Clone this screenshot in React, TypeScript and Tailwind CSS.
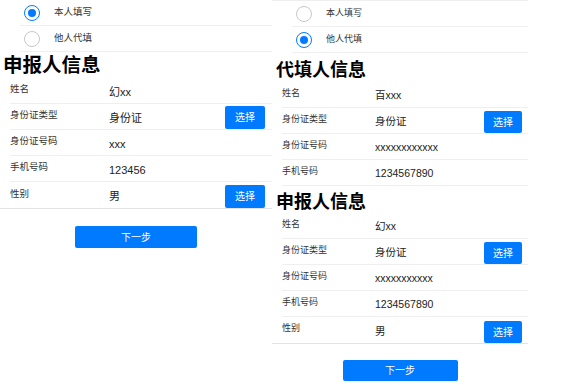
import React from 'react';

type Field = { label: string; value: string; pick?: boolean };

function Radio({ checked }: { checked: boolean }) {
  if (checked) {
    return (
      <span className="flex h-[16px] w-[16px] shrink-0 items-center justify-center rounded-full border-[1.5px] border-[#007aff]">
        <span className="h-[8px] w-[8px] rounded-full bg-[#007aff]" />
      </span>
    );
  }
  return <span className="h-[16px] w-[16px] shrink-0 rounded-full border border-[#c8c8c8]" />;
}

function RadioRow({ checked, text, big }: { checked: boolean; text: string; big?: boolean }) {
  return (
    <div className="ml-[20px] flex h-[26px] items-center border-b border-[#efefef] pl-[4px]">
      <Radio checked={checked} />
      <span className={`ml-[14px] text-[#333] ${big ? 'text-[9.5px]' : 'text-[9px]'}`}>{text}</span>
    </div>
  );
}

function FieldRow({ f, last, big }: { f: Field; last?: boolean; big?: boolean }) {
  return (
    <div className={`ml-[10px] flex h-[26px] items-center ${last ? '' : 'border-b border-[#efefef]'}`}>
      <span className={`mb-[2px] shrink-0 text-[#333] ${big ? 'w-[99px] text-[9.5px]' : 'w-[93px] text-[9px]'}`}>
        {f.label}
      </span>
      <span className={`mt-[3px] flex-1 text-[#222] ${big ? 'text-[11px]' : 'text-[10.5px]'}`}>{f.value}</span>
      {f.pick && (
        <button
          className={`self-end rounded-[2px] bg-[#007aff] text-[10px] text-white ${
            big ? 'mr-[7px] h-[23px] w-[40px]' : 'mr-[6px] h-[22px] w-[38px]'
          }`}
        >
          选择
        </button>
      )}
    </div>
  );
}

const selfFields: Field[] = [
  { label: '姓名', value: '幻xx' },
  { label: '身份证类型', value: '身份证', pick: true },
  { label: '身份证号码', value: 'xxx' },
  { label: '手机号码', value: '123456' },
  { label: '性别', value: '男', pick: true },
];

const agentFields: Field[] = [
  { label: '姓名', value: '百xxx' },
  { label: '身份证类型', value: '身份证', pick: true },
  { label: '身份证号码', value: 'xxxxxxxxxxxx' },
  { label: '手机号码', value: '1234567890' },
];

const applicantFields: Field[] = [
  { label: '姓名', value: '幻xx' },
  { label: '身份证类型', value: '身份证', pick: true },
  { label: '身份证号码', value: 'xxxxxxxxxxx' },
  { label: '手机号码', value: '1234567890' },
  { label: '性别', value: '男', pick: true },
];

export default function App() {
  return (
    <div className="flex h-[385px] w-[564px] overflow-hidden bg-white font-['Liberation_Sans','Noto_Sans_CJK_SC',sans-serif]">
      {/* filling for self */}
      <div className="w-[272px] shrink-0">
        <RadioRow checked text="本人填写" big />
        <RadioRow checked={false} text="他人代填" big />
        <div className="flex h-[26px] items-center pl-[3px] text-[19.5px] font-bold leading-[20px] text-black">
          申报人信息
        </div>
        <div className="border-b border-[#e3e3e3]">
          {selfFields.map((f, i) => (
            <FieldRow key={f.label} f={f} big last={i === selfFields.length - 1} />
          ))}
        </div>
        <button className="mx-auto mt-[17px] block h-[22px] w-[122px] rounded-[2px] bg-[#007aff] text-[10px] text-white">
          下一步
        </button>
      </div>

      {/* filling for someone else */}
      <div className="w-[256px] shrink-0">
        <div className="border-t border-[#efefef]">
          <RadioRow checked={false} text="本人填写" />
          <RadioRow checked text="他人代填" />
        </div>
        <div className="h-[29px] pl-[4px] pt-[7px] text-[18px] font-bold leading-[20px] text-black">代填人信息</div>
        {agentFields.map((f) => (
          <FieldRow key={f.label} f={f} />
        ))}
        <div className="h-[27px] pl-[4px] pt-[6px] text-[18px] font-bold leading-[20px] text-black">申报人信息</div>
        <div className="border-b border-[#e3e3e3]">
          {applicantFields.map((f, i) => (
            <FieldRow key={f.label} f={f} last={i === applicantFields.length - 1} />
          ))}
        </div>
        <button className="mx-auto mt-[16px] block h-[21px] w-[115px] rounded-[2px] bg-[#007aff] text-[10px] text-white">
          下一步
        </button>
      </div>
    </div>
  );
}
